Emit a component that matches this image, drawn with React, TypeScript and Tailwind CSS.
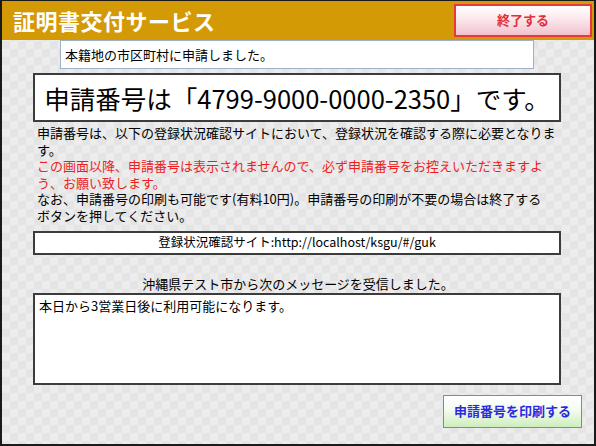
const jp = "font-['Noto_Sans_CJK_JP','Noto_Sans',sans-serif]";

export default function App() {
  return (
    <div
      className={`${jp} flex h-[446px] w-[596px] flex-col border-x-2 border-t border-b-2 border-[#1a1a1a] bg-[repeating-conic-gradient(#e4e4e4_0%_25%,#ececec_0%_50%)] bg-[length:16px_16px] text-black`}
    >
      {/* header bar */}
      <div className="flex h-[39px] shrink-0 items-center justify-between border-b border-[#8e9aae] bg-[#d49a06] pl-[11px] pr-[2px]">
        <h1 className="text-[22px] font-bold leading-none tracking-[0.5px] text-white">
          証明書交付サービス
        </h1>
        <button className="flex h-[33px] w-[138px] items-center justify-center border-2 border-[#e8383d] bg-[linear-gradient(#ffffff_0%,#fbe8ec_45%,#f2c2cc_100%)] text-[13px] font-bold text-[#e0303a]">
          終了する
        </button>
      </div>

      <div className="ml-[58px] flex h-[29px] w-[474px] items-center border border-[#9fb0cc] bg-white px-[4px] text-[13px]">
        本籍地の市区町村に申請しました。
      </div>

      <div className="ml-[31px] mt-[4px] flex h-[49px] w-[528px] items-center justify-center border-2 border-[#3c3c3c] bg-white text-[25.5px] leading-none">
        申請番号は「4799-9000-0000-2350」です。
      </div>

      <div className="ml-[35px] mt-[3px] w-[524px] text-[13px] leading-[16.6px]">
        <p>
          申請番号は、以下の登録状況確認サイトにおいて、登録状況を確認する際に必要となります。
        </p>
        <p className="text-[#ee1c1c]">
          この画面以降、申請番号は表示されませんので、必ず申請番号をお控えいただきますよう、お願い致します。
        </p>
        <p className="w-[510px]">
          なお、申請番号の印刷も可能です(有料10円)。申請番号の印刷が不要の場合は終了するボタンを押してください。
        </p>
      </div>

      <div className="ml-[31px] mt-[6px] flex h-[24px] w-[528px] items-center justify-center border-2 border-[#3c3c3c] bg-white text-[12.5px]">
        登録状況確認サイト:http://localhost/ksgu/#/guk
      </div>

      <p className="mt-[21px] text-center text-[13px] leading-[16px]">
        沖縄県テスト市から次のメッセージを受信しました。
      </p>

      <div className="ml-[31px] mt-[1px] h-[92px] w-[528px] border-2 border-[#3c3c3c] bg-white px-[4px] py-[3px] text-[13px] leading-[16px]">
        本日から3営業日後に利用可能になります。
      </div>

      <div className="mt-[10px] flex justify-end pr-[12px]">
        <button className="flex h-[33px] w-[139px] items-center justify-center border border-[#6d8cc4] bg-[linear-gradient(#ffffff_0%,#f4fbf0_45%,#cdeebc_100%)] text-[13px] font-bold text-[#2a2ae0]">
          申請番号を印刷する
        </button>
      </div>
    </div>
  );
}
